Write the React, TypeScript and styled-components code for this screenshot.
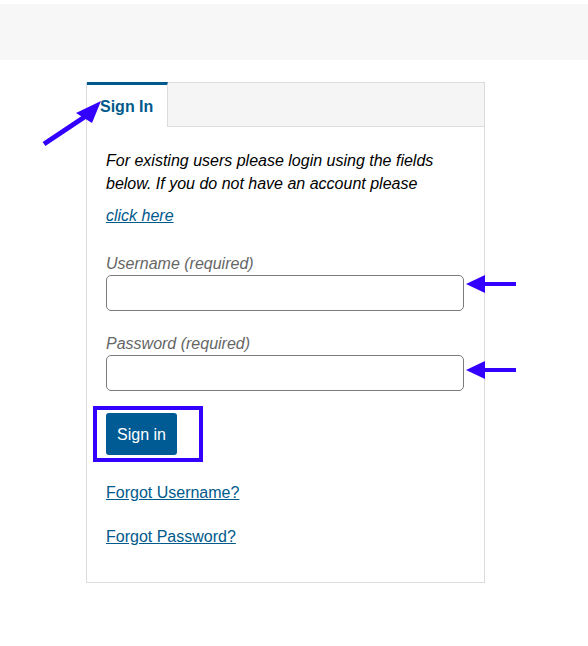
import React from "react";
import styled, { createGlobalStyle } from "styled-components";

const Global = createGlobalStyle`
  html, body { margin: 0; padding: 0; background: #fff; }
  body { font-family: "Liberation Sans", Arial, Helvetica, sans-serif; color: #000; }
  * { box-sizing: border-box; }
`;

const Page = styled.div`
  position: relative;
  width: 588px;
  min-height: 646px;
  padding-top: 4px;
`;

const Header = styled.div`
  height: 56px;
  background: #f7f7f7;
`;

const Panel = styled.div`
  margin: 22px 0 0 86px;
  width: 399px;
  border: 1px solid #dcdcdc;
  border-top: none;
  background: #fff;
`;

const TabBar = styled.div`
  display: flex;
  background: #f5f5f5;
  border-top: 1px solid #dcdcdc;
  border-bottom: 1px solid #dcdcdc;
`;

const Tab = styled.div<{ $active?: boolean }>`
  margin-top: -1px;
  margin-bottom: -1px;
  padding: 1px 14px 0 13px;
  height: 45px;
  line-height: 41px;
  font-size: 16px;
  font-weight: bold;
  color: #005a8c;
  background: ${(p) => (p.$active ? "#fff" : "transparent")};
  border-top: 3px solid ${(p) => (p.$active ? "#005a8c" : "transparent")};
  border-right: 1px solid #dcdcdc;
`;

const Content = styled.div`
  padding: 22px 20px 34px 19px;
`;

const Intro = styled.p`
  margin: 0;
  font-size: 16px;
  line-height: 23px;
  font-style: italic;
  color: #000;
`;

const LinkLine = styled.p<{ $gap: number; $italic?: boolean }>`
  margin: ${(p) => p.$gap}px 0 0;
  font-size: 16px;
  line-height: ${(p) => (p.$italic ? 23 : 22)}px;
  font-style: ${(p) => (p.$italic ? "italic" : "normal")};
`;

const Link = styled.a`
  color: #005a8c;
  text-decoration: underline;
  cursor: pointer;
`;

const Field = styled.div<{ $gap: number }>`
  margin-top: ${(p) => p.$gap}px;
  display: flex;
  flex-direction: column;
`;

const Label = styled.label`
  padding-top: 1px;
  font-size: 16px;
  line-height: 22px;
  font-style: italic;
  color: #666;
`;

const Input = styled.input`
  width: 358px;
  height: 36px;
  border: 1px solid #7a7a7a;
  border-radius: 5px;
  padding: 0 8px;
  font-size: 16px;
  font-family: inherit;
  background: #fff;
  outline: none;
`;

const Button = styled.button`
  margin-top: 22px;
  display: block;
  height: 42px;
  padding: 1px 11px 0;
  border: none;
  border-radius: 3px;
  background: #005b95;
  color: #fff;
  font-family: "Liberation Sans", Arial, sans-serif;
  font-size: 16px;
  line-height: 41px;
  cursor: pointer;
`;

const Highlight = styled.div`
  position: absolute;
  left: 93px;
  top: 406px;
  width: 110px;
  height: 56px;
  border: 4px solid #3300ff;
  pointer-events: none;
`;

const Annotations = styled.svg`
  position: absolute;
  left: 0;
  top: 0;
  width: 588px;
  height: 646px;
  pointer-events: none;
`;

export default function App() {
  return (
    <>
      <Global />
      <Page>
        <Header />
        <Panel>
          <TabBar>
            <Tab $active>Sign In</Tab>
          </TabBar>
          <Content>
            <Intro>
              For existing users please login using the fields below. If you do not have an account please
            </Intro>
            <LinkLine $gap={9} $italic>
              <Link>click here</Link>
            </LinkLine>
            <Field $gap={25}>
              <Label>Username (required)</Label>
              <Input type="text" />
            </Field>
            <Field $gap={21}>
              <Label>Password (required)</Label>
              <Input type="password" />
            </Field>
            <Button>Sign in</Button>
            <LinkLine $gap={27}>
              <Link>Forgot Username?</Link>
            </LinkLine>
            <LinkLine $gap={22}>
              <Link>Forgot Password?</Link>
            </LinkLine>
          </Content>
        </Panel>
        <Highlight />
        <Annotations viewBox="0 0 588 646">
          <line x1="44" y1="144" x2="86" y2="116" stroke="#3300ff" strokeWidth="5" />
          <polygon points="101,101 76,113 92,123" fill="#3300ff" />
          <line x1="484" y1="284" x2="516" y2="284" stroke="#3300ff" strokeWidth="4" />
          <polygon points="466,284 485,275 485,293" fill="#3300ff" />
          <line x1="484" y1="370" x2="516" y2="370" stroke="#3300ff" strokeWidth="4" />
          <polygon points="466,370 485,361 485,379" fill="#3300ff" />
        </Annotations>
      </Page>
    </>
  );
}
